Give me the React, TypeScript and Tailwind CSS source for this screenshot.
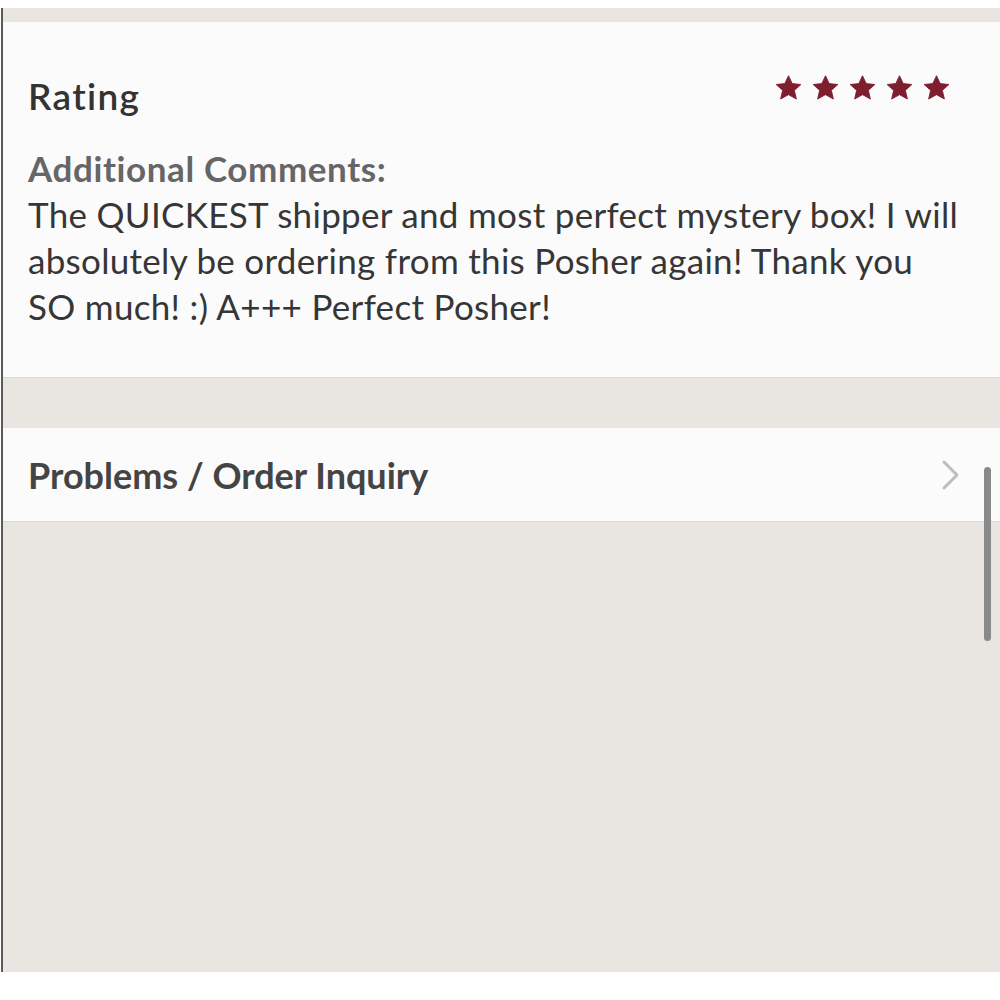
const FONT = "font-['Lato','Open_Sans',sans-serif]"

function Star() {
  return (
    <svg width="27" height="26" viewBox="0 0 24 23">
      <path
        d="M12 0.6l3.3 7 7.7 0.8-5.8 5.2 1.8 7.7L12 17.4 5 21.3l1.8-7.7L1 8.4l7.7-0.8z"
        fill="#7e1e2e"
        stroke="#7e1e2e"
        strokeWidth="0.8"
        strokeLinejoin="round"
      />
    </svg>
  )
}

export default function App() {
  return (
    <div className={`w-[1000px] h-[1000px] bg-white pt-[8px] relative ${FONT}`}>
      <div className="ml-[1px] h-[964px] border-l-2 border-[#5a5a5a] bg-[#e9e6e2] flex flex-col">
        <div className="h-[14px] shrink-0" />

        {/* Rating card */}
        <div className="h-[356px] shrink-0 bg-[#fcfbfc] border-b border-[#dcd9d5] pl-[25px] pr-[50px] pt-[52px]">
          <div className="flex items-start justify-between">
            <h2 className="text-[37px] leading-[44px] font-semibold text-[#333] tracking-[1.3px]">Rating</h2>
            <div className="flex gap-[10px] pt-[1px]">
              <Star />
              <Star />
              <Star />
              <Star />
              <Star />
            </div>
          </div>
          <div className="mt-[27px] text-[35px] leading-[46px] text-[#363636] tracking-[0.3px]">
            <div className="font-bold text-[#666] tracking-[0.6px]">Additional Comments:</div>
            <p className="whitespace-nowrap">
              The QUICKEST shipper and most perfect mystery box! I will
              <br />
              absolutely be ordering from this Posher again! Thank you
              <br />
              SO much! :) A+++ Perfect Posher!
            </p>
          </div>
        </div>

        <div className="h-[50px] shrink-0" />

        {/* Problems row */}
        <div className="h-[94px] shrink-0 bg-[#fcfbfc] border-b border-[#dcd9d5] pl-[25px] pr-[38px] flex items-center justify-between">
          <span className="text-[36px] font-bold text-[#444] tracking-[0px]">Problems / Order Inquiry</span>
          <svg width="22" height="32" viewBox="0 0 22 32" fill="none">
            <path d="M4 3l13 13-13 13" stroke="#bdbdbd" strokeWidth="3" strokeLinecap="round" strokeLinejoin="round" />
          </svg>
        </div>

        <div className="flex-1" />
      </div>

      {/* scrollbar */}
      <div className="absolute left-[984px] top-[467px] w-[7px] h-[174px] rounded-full bg-[#8a8a8a]" />
    </div>
  )
}
